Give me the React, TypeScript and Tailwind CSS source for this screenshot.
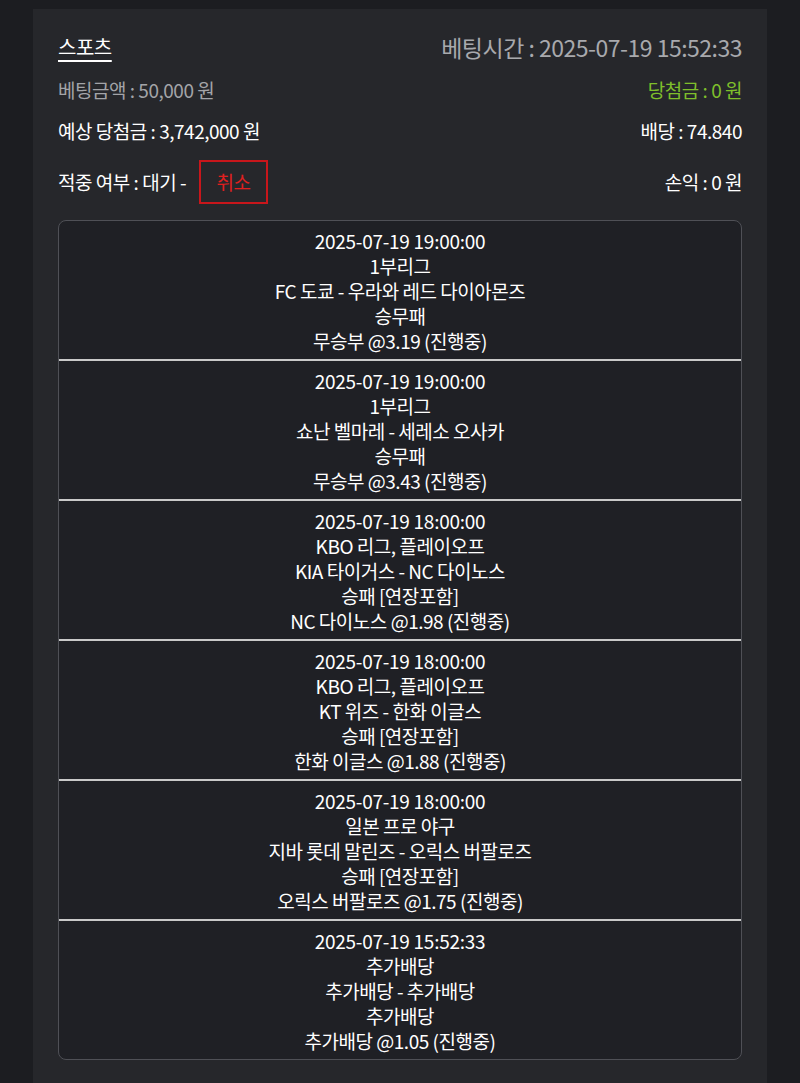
const bets = [
  {
    time: "2025-07-19 19:00:00",
    league: "1부리그",
    match: "FC 도쿄 - 우라와 레드 다이아몬즈",
    market: "승무패",
    pick: "무승부 @3.19 (진행중)",
  },
  {
    time: "2025-07-19 19:00:00",
    league: "1부리그",
    match: "쇼난 벨마레 - 세레소 오사카",
    market: "승무패",
    pick: "무승부 @3.43 (진행중)",
  },
  {
    time: "2025-07-19 18:00:00",
    league: "KBO 리그, 플레이오프",
    match: "KIA 타이거스 - NC 다이노스",
    market: "승패 [연장포함]",
    pick: "NC 다이노스 @1.98 (진행중)",
  },
  {
    time: "2025-07-19 18:00:00",
    league: "KBO 리그, 플레이오프",
    match: "KT 위즈 - 한화 이글스",
    market: "승패 [연장포함]",
    pick: "한화 이글스 @1.88 (진행중)",
  },
  {
    time: "2025-07-19 18:00:00",
    league: "일본 프로 야구",
    match: "지바 롯데 말린즈 - 오릭스 버팔로즈",
    market: "승패 [연장포함]",
    pick: "오릭스 버팔로즈 @1.75 (진행중)",
  },
  {
    time: "2025-07-19 15:52:33",
    league: "추가배당",
    match: "추가배당 - 추가배당",
    market: "추가배당",
    pick: "추가배당 @1.05 (진행중)",
  },
];

export default function App() {
  return (
    <div
      className="min-h-[1083px] bg-[#1c1d21] px-[33px] pt-[9px] tracking-[-0.03em]"
      style={{ fontFamily: '"Noto Sans CJK KR", "Noto Sans", sans-serif' }}
    >
      <div className="bg-[#26272b] px-[25px] pt-[23px] pb-[40px]">
        <div className="flex h-[30px] items-center justify-between">
          <span className="text-[20px] text-white underline underline-offset-[5px]">스포츠</span>
          <span className="text-[23px] tracking-[-0.022em] text-[#a8a9ad]">베팅시간 : 2025-07-19 15:52:33</span>
        </div>

        <div className="mt-[14px] flex h-[28px] items-center justify-between text-[19px]">
          <span className="text-[#a3a4a8]">베팅금액 : 50,000 원</span>
          <span className="text-[#7fbf2b]">당첨금 : 0 원</span>
        </div>

        <div className="mt-[13px] flex h-[28px] items-center justify-between text-[19px] text-white">
          <span>예상 당첨금 : 3,742,000 원</span>
          <span>배당 : 74.840</span>
        </div>

        <div className="mt-[15px] flex h-[44px] items-center justify-between text-[19px] text-white">
          <div className="flex items-center gap-[13px]">
            <span>적중 여부 : 대기 -</span>
            <button className="flex h-[44px] w-[69px] items-center justify-center border-2 border-[#c8161b] text-[19px] text-[#e0201f]">
              취소
            </button>
          </div>
          <span>손익 : 0 원</span>
        </div>

        <div className="mt-[16px] overflow-hidden rounded-[8px] border-[1.5px] border-[#4f5056] bg-[#1f2025]">
          {bets.map((b, i) => (
            <div
              key={i}
              className={`flex flex-col items-center pt-[7px] pb-[6px] text-[19px] leading-[25px] text-white ${
                i < bets.length - 1 ? "border-b-2 border-[#c9c9c9]" : ""
              }`}
            >
              <span className="tracking-[-0.014em]">{b.time}</span>
              <span>{b.league}</span>
              <span>{b.match}</span>
              <span>{b.market}</span>
              <span>{b.pick}</span>
            </div>
          ))}
        </div>
      </div>
    </div>
  );
}
